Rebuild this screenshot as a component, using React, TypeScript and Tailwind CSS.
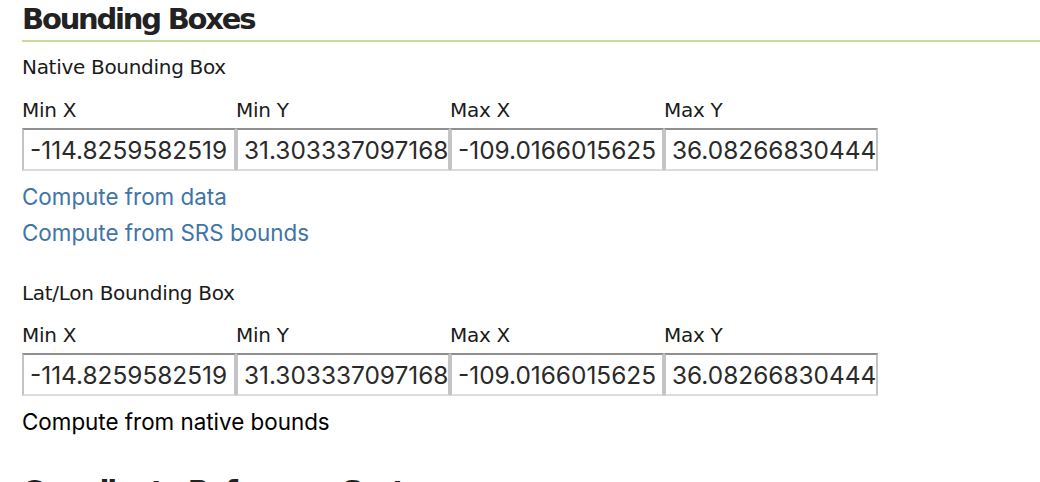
import React from "react";

const vals = ["-114.8259582519", "31.303337097168", "-109.0166015625", "36.08266830444"];
const labels = ["Min X", "Min Y", "Max X", "Max Y"];

function BoxRow() {
  return (
    <div className="flex flex-col">
      <div className="flex">
        {labels.map((l) => (
          <div key={l} className="w-[214px] h-[36px] flex items-center text-[20px] tracking-[-0.3px] text-[#1a1a1a]">
            {l}
          </div>
        ))}
      </div>
      <div className="flex">
        {vals.map((v) => (
          <input
            key={v}
            readOnly
            value={v}
            className="w-[214px] h-[43px] pl-[6px] pr-0 text-[24.4px] text-[#2a2a2a] border-2 border-t-[#8f8f8f] border-l-[#c4c4c4] border-r-[#c4c4c4] border-b-[#dcdcdc] bg-white outline-none [font-family:Inter,'Noto_Sans',sans-serif]"
          />
        ))}
      </div>
    </div>
  );
}

export default function App() {
  return (
    <div className="w-[1040px] h-[482px] overflow-hidden bg-white pl-[22px] [font-family:'DejaVu_Sans',Verdana,sans-serif] text-[#1a1a1a]">
      <h2 className="h-[42px] border-b-2 border-[#c8dc96] text-[29px] font-bold leading-[38px] tracking-[-2.2px] text-[#222]">
        Bounding Boxes
      </h2>
      <div className="h-[50px] flex items-center text-[20px] tracking-[-0.3px]">Native Bounding Box</div>
      <BoxRow />
      <div className="mt-[8px] flex flex-col text-[22.4px] text-[#4174a6] [font-family:Inter,'Noto_Sans',sans-serif]">
        <a className="h-[36px] flex items-center">Compute from data</a>
        <a className="h-[36px] flex items-center">Compute from SRS bounds</a>
      </div>
      <div className="mt-[17px] h-[49px] flex items-center text-[20px] tracking-[-0.3px]">Lat/Lon Bounding Box</div>
      <BoxRow />
      <div className="mt-[8px] h-[36px] flex items-center text-[22.4px] text-black [font-family:Inter,'Noto_Sans',sans-serif]">
        Compute from native bounds
      </div>
      <h2 className="mt-[32px] text-[29px] font-bold leading-[38px] tracking-[-2.2px] text-[#222]">
        Coordinate Reference Systems
      </h2>
    </div>
  );
}
